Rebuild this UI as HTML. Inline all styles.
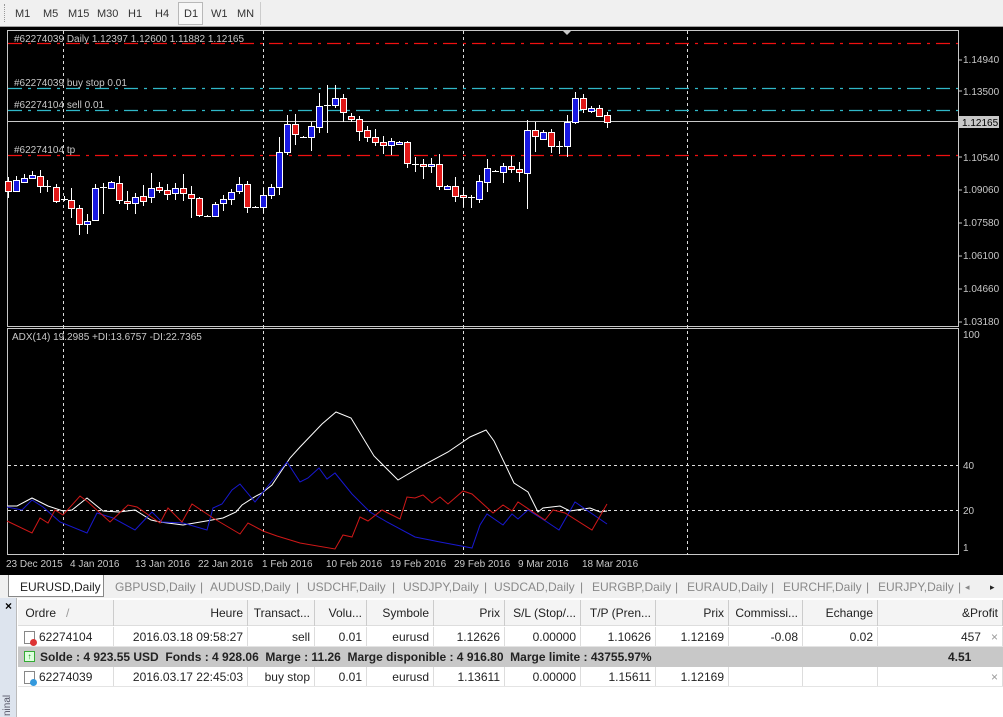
<!DOCTYPE html>
<html><head><meta charset="utf-8"><style>
*{margin:0;padding:0;box-sizing:border-box}
body{width:1003px;height:717px;overflow:hidden;background:#f0f0f0;font-family:"Liberation Sans",sans-serif;position:relative}
.tb{position:absolute;left:0;top:0;width:1003px;height:27px;background:#f0f0f0;border-bottom:1px solid #a0a0a0}
.tb span{position:absolute;top:8px;font-size:11px;color:#333}
.d1{position:absolute;left:178px;top:2px;width:25px;height:23px;border:1px solid #b8b8b8;background:#f7f7f7}
svg text{font-family:"Liberation Sans",sans-serif}
.tabs{position:absolute;left:0;top:575px;width:1003px;height:23px;background:#f0f0f0;font-size:12px;color:#888}
.tabs span{position:absolute;top:5px}
.term{position:absolute;left:0;top:598px;width:1003px;height:119px;background:#fff}
.row{position:absolute;left:18px;width:985px;font-size:12px;color:#222}
.c{position:absolute;top:0;height:100%;border-right:1px solid #ddd;padding:0 4px;line-height:20px;text-align:right;white-space:nowrap;overflow:hidden}
</style></head><body>
<div class="tb">
<div style="position:absolute;left:4px;top:4px;width:3px;height:18px;border-left:1px dotted #999"></div>
<div class="d1"></div>
<span style="left:15px">M1</span><span style="left:43px">M5</span><span style="left:68px">M15</span><span style="left:97px">M30</span><span style="left:128px">H1</span><span style="left:155px">H4</span><span style="left:184px">D1</span><span style="left:211px">W1</span><span style="left:237px">MN</span>
<div style="position:absolute;left:260px;top:2px;height:23px;border-left:1px solid #ccc"></div>
</div>
<svg id="ch" style="position:absolute;left:0;top:27px" width="1003" height="548" viewBox="0 27 1003 548">
<rect x="0" y="27" width="1003" height="548" fill="#000"/>
<rect x="7.5" y="30.5" width="951" height="296" fill="none" stroke="#c8c8c8"/>
<rect x="7.5" y="328.5" width="951" height="226" fill="none" stroke="#c8c8c8"/>
<g stroke="#ddd" stroke-dasharray="3,3" stroke-width="1">
<line x1="63.5" y1="31" x2="63.5" y2="555"/><line x1="263.5" y1="31" x2="263.5" y2="555"/><line x1="463.5" y1="31" x2="463.5" y2="555"/><line x1="687.5" y1="31" x2="687.5" y2="555"/>
<line x1="8" y1="465.5" x2="958" y2="465.5"/><line x1="8" y1="510.5" x2="958" y2="510.5"/>
</g>
<g stroke-dasharray="14,6,3,6" stroke-width="1.3">
<line x1="8" y1="43.5" x2="958" y2="43.5" stroke="#f01010"/>
<line x1="8" y1="88.5" x2="958" y2="88.5" stroke="#30b8c8"/>
<line x1="8" y1="110.5" x2="958" y2="110.5" stroke="#30b8c8"/>
<line x1="8" y1="155.5" x2="958" y2="155.5" stroke="#f01010"/>
</g>
<line x1="8" y1="121.5" x2="958" y2="121.5" stroke="#c8c8c8"/>
<g id="cd"></g>
<polyline fill="none" stroke="#fff" points="7,506 17,506 32,498 48,506 63,511 72,510 87,498 103,511 119,512 135,510 151,520 160,522 183,525 212,520 223,518 236,512 242,505 256,496 262,493 272,485 290,458 300,447 322,424 336,412 351,418 374,456 398,480 420,467 448,452 470,437 486,430 494,441 514,483 528,492 538,512 543,508 560,506 570,511 590,508 600,512 607,511"/>
<polyline fill="none" stroke="#1818d0" points="7,507 22,510 32,500 43,507 60,522 87,533 97,513 113,518 135,530 152,512 162,522 183,523 207,530 213,508 222,504 232,490 240,484 255,502 273,480 287,462 300,482 308,478 319,468 327,479 335,473 352,494 370,512 387,522 415,537 440,542 472,548 480,525 487,514 503,525 512,514 518,519 528,510 547,522 559,530 575,502 607,524"/>
<polyline fill="none" stroke="#d01818" points="7,521 32,533 40,518 48,523 55,510 63,515 80,496 88,502 110,522 128,505 137,507 160,523 168,508 182,522 192,504 213,518 240,534 248,523 263,531 277,536 300,543 335,549 343,535 352,537 360,517 368,521 382,510 400,519 407,497 415,498 423,495 432,503 440,497 448,504 463,491 472,494 493,513 503,505 512,511 518,502 545,520 553,510 565,513 592,530 607,504"/>
<g fill="#c8c8c8" font-size="10">
<text x="14" y="42">#62274039 Daily  1.12397 1.12600 1.11882 1.12165</text>
<text x="14" y="86">#62274039 buy stop 0.01</text>
<text x="14" y="108">#62274104 sell 0.01</text>
<text x="14" y="153">#62274104 tp</text>
<text x="12" y="340">ADX(14) 19.2985 +DI:13.6757 -DI:22.7365</text>
<text x="963" y="63">1.14940</text><text x="963" y="95">1.13500</text>
<text x="963" y="161">1.10540</text><text x="963" y="193">1.09060</text><text x="963" y="226">1.07580</text><text x="963" y="259">1.06100</text><text x="963" y="292">1.04660</text><text x="963" y="325">1.03180</text>
<text x="963" y="338">100</text><text x="963" y="469">40</text><text x="963" y="514">20</text><text x="963" y="551">1</text>
<text x="6" y="567">23 Dec 2015</text><text x="70" y="567">4 Jan 2016</text><text x="135" y="567">13 Jan 2016</text><text x="198" y="567">22 Jan 2016</text><text x="262" y="567">1 Feb 2016</text><text x="326" y="567">10 Feb 2016</text><text x="390" y="567">19 Feb 2016</text><text x="454" y="567">29 Feb 2016</text><text x="518" y="567">9 Mar 2016</text><text x="582" y="567">18 Mar 2016</text>
</g>
<rect x="959" y="116" width="40" height="12" fill="#c8c8c8"/>
<text x="962" y="126" font-size="10" fill="#000">1.12165</text>
<g stroke="#c8c8c8"><line x1="959" y1="60" x2="962" y2="60"/><line x1="959" y1="91" x2="962" y2="91"/><line x1="959" y1="157" x2="962" y2="157"/><line x1="959" y1="190" x2="962" y2="190"/><line x1="959" y1="223" x2="962" y2="223"/><line x1="959" y1="256" x2="962" y2="256"/><line x1="959" y1="289" x2="962" y2="289"/><line x1="959" y1="322" x2="962" y2="322"/></g>
<polygon points="563,31 571,31 567,35" fill="#c8c8c8"/>
</svg>
<div class="tabs">
<div style="position:absolute;left:8px;top:0;width:96px;height:22px;background:#fff;border:1px solid #888;border-top:none"></div>
<span style="left:20px;color:#222">EURUSD,Daily</span>
<span style="left:115px">GBPUSD,Daily</span><span style="left:200px">|</span>
<span style="left:210px">AUDUSD,Daily</span><span style="left:296px">|</span>
<span style="left:307px">USDCHF,Daily</span><span style="left:392px">|</span>
<span style="left:403px">USDJPY,Daily</span><span style="left:484px">|</span>
<span style="left:494px">USDCAD,Daily</span><span style="left:580px">|</span>
<span style="left:592px">EURGBP,Daily</span><span style="left:675px">|</span>
<span style="left:687px">EURAUD,Daily</span><span style="left:771px">|</span>
<span style="left:783px">EURCHF,Daily</span><span style="left:866px">|</span>
<span style="left:878px">EURJPY,Daily</span><span style="left:958px">|</span>
<span style="left:965px;font-size:9px;top:7px">◂</span><span style="left:990px;font-size:9px;top:7px;color:#222">▸</span>
</div>
<div class="term">
<div style="position:absolute;left:0;top:0;width:17px;height:119px;background:#dde4ee;border-right:1px solid #bbb"></div>
<div style="position:absolute;left:5px;top:1px;font-size:12px;font-weight:bold">×</div>
<div style="position:absolute;left:2px;font-size:10px;color:#556;transform:rotate(-90deg);transform-origin:left top;top:118px">ninal</div>
<div class="row" style="top:2px;height:26px;background:#f4f4f4;border-bottom:1px solid #ddd"></div>
<div class="row" style="top:2px;height:26px" id="h"></div>
<div class="row" style="top:29px;height:20px;border-bottom:1px solid #e4e4e4" id="r1"></div>
<div class="row" style="top:49px;height:20px;background:#c8c8c8;font-weight:bold;line-height:20px">
<div style="position:absolute;left:6px;top:4px;width:11px;height:11px;border:1px solid #3a3;background:#dfd;font-size:8px;line-height:9px;text-align:center;color:#080">↑</div>
<span style="position:absolute;left:22px">Solde : 4 923.55 USD&nbsp; Fonds : 4 928.06&nbsp; Marge : 11.26&nbsp; Marge disponible : 4 916.80&nbsp; Marge limite : 43755.97%</span>
<span style="position:absolute;left:930px">4.51</span></div>
<div class="row" style="top:69px;height:20px;border-bottom:1px solid #e4e4e4" id="r2"></div>
</div>
<script>
var C=[[8,'r',121,131,117,138],[16,'b',120,131,116,132],[24,'b',118,122,114,123],[32,'b',115,118,111,119],[40,'r',116,126,110,133],[47,'d',126,126,120,132],[56,'r',127,141,124,143],[64,'d',139,139,136,141],[71,'r',140,148,128,158],[79,'r',148,164,145,175],[87,'b',161,164,154,174],[95,'b',128,160,124,161],[103,'d',127,127,123,154],[111,'b',122,128,121,129],[119,'r',123,140,116,144],[127,'r',141,143,131,150],[135,'b',137,143,133,154],[143,'r',136,141,125,146],[151,'b',128,137,113,143],[159,'r',127,130,122,133],[167,'r',130,134,124,140],[175,'b',128,133,123,140],[183,'r',128,133,114,141],[191,'r',134,138,126,158],[199,'r',138,155,137,157],[207,'d',156,156,155,157],[215,'b',144,156,142,157],[223,'b',139,143,135,151],[231,'b',132,139,129,145],[239,'b',124,131,117,134],[247,'r',124,147,121,153],[255,'d',147,147,146,148],[263,'b',135,147,128,153],[271,'b',127,135,124,139]];
C.forEach(function(c){for(var i=2;i<6;i++)c[i]+=60;});
C=C.concat([[279,'b',152,187,137,195],[287,'b',124,152,115,155],[295,'r',124,134,114,145],[303,'d',137,137,136,138],[311,'b',126,137,122,151],[319,'b',106,127,93,133],[327,'d',105,105,85,133],[335,'b',98,105,85,108],[343,'r',98,112,94,122],[351,'r',116,119,113,122],[359,'r',119,131,116,141],[367,'r',130,137,126,142],[375,'r',137,142,129,146],[383,'r',142,145,136,154],[391,'b',141,145,138,155],[399,'b',142,144,141,145],[407,'r',142,163,141,168],[415,'d',164,164,157,172],[423,'r',164,166,159,179],[431,'b',164,166,158,173],[439,'r',164,186,154,190],[447,'b',186,189,185,190],[455,'r',186,196,177,202],[463,'r',195,197,187,207],[471,'d',197,197,195,208],[479,'b',181,199,175,203],[487,'b',168,182,159,192],[495,'d',171,171,170,172],[503,'b',166,172,163,183],[511,'r',166,169,156,173],[519,'r',169,172,162,182],[527,'b',130,173,120,209],[535,'r',130,136,122,152],[543,'b',132,139,130,140],[551,'r',132,146,129,153],[559,'d',146,146,141,154],[567,'b',122,146,115,157],[575,'b',98,122,92,124],[583,'r',98,109,94,113],[591,'b',108,111,106,113],[599,'r',108,116,105,117],[607,'r',115,122,112,128]]);
var s='';C.forEach(function(c){var x=c[0];s+='<line x1="'+(x+.5)+'" y1="'+c[4]+'" x2="'+(x+.5)+'" y2="'+c[5]+'" stroke="#fff"/>';
if(c[1]=='d')s+='<line x1="'+(x-3)+'" y1="'+(c[2]+.5)+'" x2="'+(x+4)+'" y2="'+(c[2]+.5)+'" stroke="#fff"/>';
else s+='<rect x="'+(x-2.5)+'" y="'+(c[2]+.5)+'" width="6" height="'+Math.max(2,c[3]-c[2])+'" fill="'+(c[1]=='r'?'#e01818':'#1818e0')+'" stroke="#fff"/>';});
document.getElementById('cd').innerHTML=s;
var W=[[0,96],[96,134],[230,67],[297,52],[349,67],[416,71],[487,76],[563,75],[638,73],[711,74],[785,75],[860,125]];
function row(id,v){var h='';W.forEach(function(w,i){var t=v[i]||'';h+='<div class="c" style="left:'+w[0]+'px;width:'+w[1]+'px;text-align:'+(i==0?'left':'right')+'">'+t+'</div>';});document.getElementById(id).innerHTML=h;}
row('h',['&nbsp;Ordre &nbsp;&nbsp;<span style="color:#999">/</span>','Heure','Transact...','Volu...','Symbole','Prix','S/L (Stop/...','T/P (Pren...','Prix','Commissi...','Echange','&amp;Profit']);
document.querySelectorAll('#h .c').forEach(function(e){e.style.lineHeight='26px';e.style.borderRight='1px solid #ccc'});
row('r1',['<span style="display:inline-block;width:11px;height:13px;border:1px solid #888;vertical-align:middle;margin:0 4px 0 2px;position:relative"><span style="position:absolute;right:-3px;bottom:-3px;width:7px;height:7px;border-radius:50%;background:#d33"></span></span>62274104','2016.03.18 09:58:27','sell','0.01','eurusd','1.12626','0.00000','1.10626','1.12169','-0.08','0.02','457 &nbsp;&nbsp;<span style="color:#999">×</span>']);
row('r2',['<span style="display:inline-block;width:11px;height:13px;border:1px solid #888;vertical-align:middle;margin:0 4px 0 2px;position:relative"><span style="position:absolute;right:-3px;bottom:-3px;width:7px;height:7px;border-radius:50%;background:#39d"></span></span>62274039','2016.03.17 22:45:03','buy stop','0.01','eurusd','1.13611','0.00000','1.15611','1.12169','','','<span style="color:#999">×</span>']);
</script>
</body></html>
